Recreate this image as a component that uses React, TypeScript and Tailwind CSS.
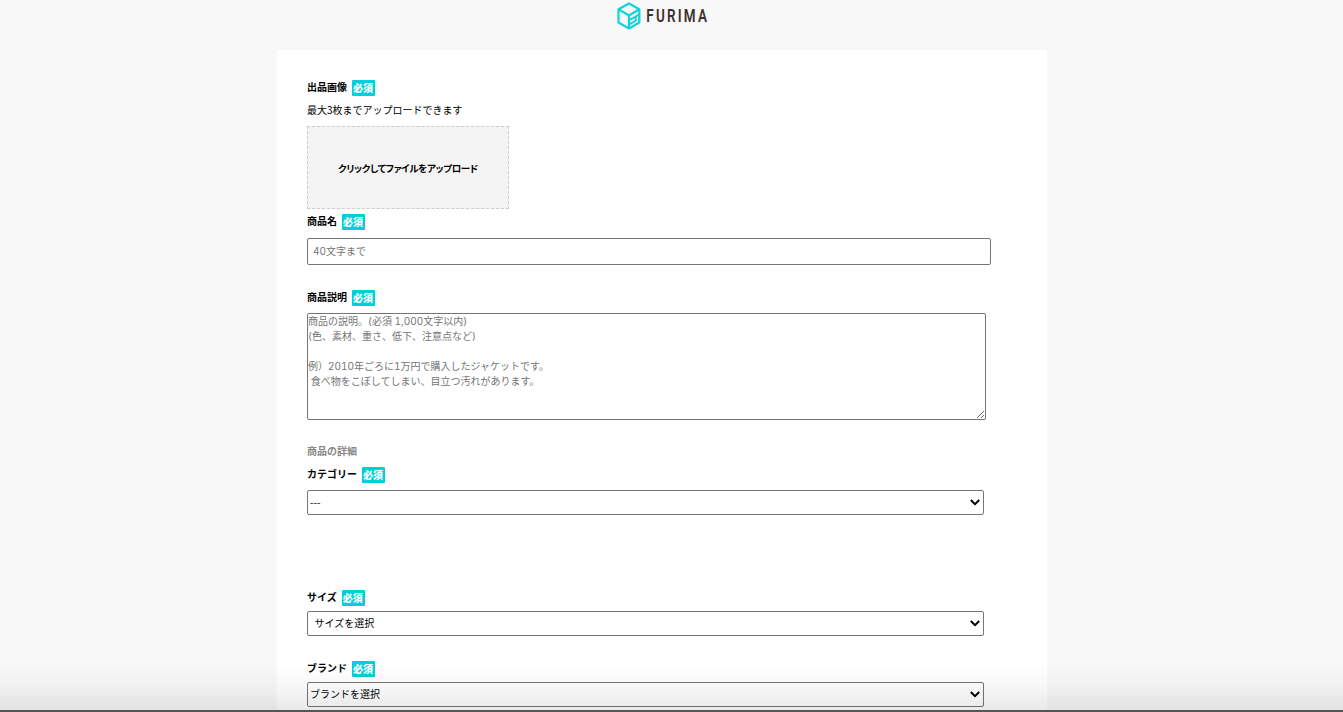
import React from "react";

function Logo() {
  return (
    <header className="flex h-[50px] shrink-0 justify-center pt-px pr-[19px]">
      <div className="flex h-[30px] w-[91px] items-center">
        <svg width="24" height="28" viewBox="0 0 24 28" fill="none" stroke="#16d3d8" strokeWidth="2.3" strokeLinejoin="round" className="shrink-0">
          <path d="M12 1.4 22.3 7.3V20.4L12 26.4 1.5 20.4V7.3Z" />
          <path d="M1.5 7.3 12 13.6V26.4M12 13.6 22.3 7.3" />
          <path strokeWidth="1.9" d="M12 18.4 22.3 12.4M12 22.6 18.8 18.6V15" />
        </svg>
        <svg width="62" height="20" viewBox="0 0 62 20" className="ml-[5px] shrink-0">
          <text x="0.5" y="16.2" textLength="83" lengthAdjust="spacing" fontFamily="Roboto, sans-serif" fontSize="18.5" fontWeight="600" fill="#3c302e" transform="scale(0.73 1)">FURIMA</text>
        </svg>
      </div>
    </header>
  );
}

function FieldLabel({ children, className = "" }: { children: React.ReactNode; className?: string }) {
  return (
    <div className={`flex h-4 items-center ${className}`}>
      <span className="-mt-0.5 font-bold leading-4">{children}</span>
      <span className="ml-[5px] flex h-4 w-[23px] items-center justify-center rounded-[1px] bg-[#00cfdb] pr-px font-black leading-4 text-white">必須</span>
    </div>
  );
}

function SelectBox({ option, className = "" }: { option: string; className?: string }) {
  return (
    <div className={`grid h-[25px] w-[677px] items-center ${className}`}>
      <select className="col-start-1 row-start-1 h-[25px] w-full appearance-none rounded-[2px] border border-[#767676] bg-transparent pb-[2px] pl-[2px] text-[10px] text-black outline-none">
        <option>{option}</option>
      </select>
      <svg width="10" height="7" viewBox="0 0 10 7" fill="none" stroke="#000" strokeWidth="2" className="pointer-events-none col-start-1 row-start-1 mr-1 justify-self-end">
        <path d="M0.8 1 5 5.2 9.2 1" />
      </svg>
    </div>
  );
}

const descriptionHint =
  "商品の説明。(必須 1,000文字以内)\n(色、素材、重さ、低下、注意点など)\n\n例）2010年ごろに1万円で購入したジャケットです。\n 食べ物をこぼしてしまい、目立つ汚れがあります。";

export default function App() {
  return (
    <div className="relative flex h-[712px] flex-col overflow-hidden bg-[#f8f8f8] font-['Noto_Sans_CJK_JP',sans-serif] text-[10px] text-black">
      <Logo />
      <main className="ml-[277px] flex w-[770px] flex-1 flex-col bg-white px-[30px] pt-[30px]">
        <FieldLabel>出品画像</FieldLabel>
        <p className="mt-1.5 h-[15px] leading-[15px]">最大3枚までアップロードできます</p>
        <label className="mt-[9px] flex h-[83px] w-[202px] shrink-0 items-center justify-center border border-dashed border-[#ccc] bg-[#f4f4f4] pt-px font-bold">
          <span className="whitespace-nowrap text-[9.5px] tracking-[-0.33px] [font-feature-settings:'palt']">クリックしてファイルをアップロード</span>
        </label>
        <FieldLabel className="mt-[5px]">商品名</FieldLabel>
        <input className="mt-2 h-[27px] w-[684px] shrink-0 rounded-[2px] border border-[#767676] px-[5px] pb-px font-['Inter','Noto_Sans_CJK_JP',sans-serif] outline-none [font-feature-settings:'tnum'] placeholder:text-[#757575]" placeholder="40文字まで" />
        <FieldLabel className="mt-[25px]">商品説明</FieldLabel>
        <textarea className="mt-[7px] h-[107px] w-[679px] shrink-0 rounded-[2px] border border-[#767676] font-['Inter','Noto_Sans_CJK_JP',sans-serif] leading-[15px] outline-none [font-feature-settings:'tnum'] placeholder:text-[#757575]" placeholder={descriptionHint} />
        <h2 className="mt-[23px] h-[15px] font-bold leading-[15px] text-[#888]">商品の詳細</h2>
        <FieldLabel className="mt-[9px]">カテゴリー</FieldLabel>
        <SelectBox option="---" className="mt-[7px]" />
        <FieldLabel className="mt-[75px]">サイズ</FieldLabel>
        <SelectBox option={"\u00a0\u00a0サイズを選択"} className="mt-[5px]" />
        <FieldLabel className="mt-[25px]">ブランド</FieldLabel>
        <SelectBox option="ブランドを選択" className="mt-[5px]" />
      </main>
      <div className="pointer-events-none absolute inset-x-0 bottom-0 h-[48px] border-b-2 border-[#575557] bg-linear-to-b from-transparent via-black/3 to-black/9" />
    </div>
  );
}
